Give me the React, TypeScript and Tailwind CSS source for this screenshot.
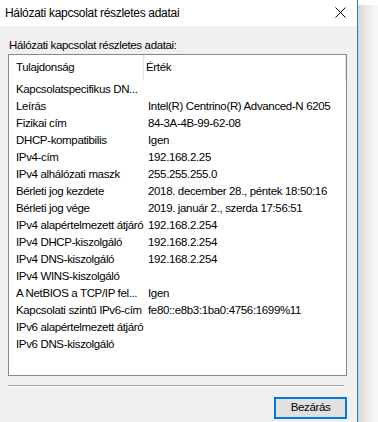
import React from "react";

const rows: [string, string][] = [
  ["Kapcsolatspecifikus DN...", ""],
  ["Leírás", "Intel(R) Centrino(R) Advanced-N 6205"],
  ["Fizikai cím", "84-3A-4B-99-62-08"],
  ["DHCP-kompatibilis", "Igen"],
  ["IPv4-cím", "192.168.2.25"],
  ["IPv4 alhálózati maszk", "255.255.255.0"],
  ["Bérleti jog kezdete", "2018. december 28., péntek 18:50:16"],
  ["Bérleti jog vége", "2019. január 2., szerda 17:56:51"],
  ["IPv4 alapértelmezett átjáró", "192.168.2.254"],
  ["IPv4 DHCP-kiszolgáló", "192.168.2.254"],
  ["IPv4 DNS-kiszolgáló", "192.168.2.254"],
  ["IPv4 WINS-kiszolgáló", ""],
  ["A NetBIOS a TCP/IP fel...", "Igen"],
  ["Kapcsolati szintű IPv6-cím", "fe80::e8b3:1ba0:4756:1699%11"],
  ["IPv6 alapértelmezett átjáró", ""],
  ["IPv6 DNS-kiszolgáló", ""],
];

export default function App() {
  return (
    <div
      className="flex w-[378px] h-[422px] overflow-hidden text-[11.5px] tracking-[-0.35px] text-black"
      style={{ fontFamily: '"Liberation Sans", Arial, sans-serif' }}
    >
      <div className="w-[357px] flex flex-col bg-[#f0f0f0]">
        <div className="h-[26px] bg-white flex items-center justify-between pl-[5px] pr-[11px]">
          <span className="text-[12px] tracking-[-0.3px] leading-none">Hálózati kapcsolat részletes adatai</span>
          <svg width="11" height="11" viewBox="0 0 11 11" className="mb-[2px]">
            <path d="M0.5 0.5 L10.5 10.5 M10.5 0.5 L0.5 10.5" stroke="#000" strokeWidth="1" />
          </svg>
        </div>
        <div className="pl-[9px] pt-[12px] h-[28px] leading-[14px]">Hálózati kapcsolat részletes adatai:</div>
        <div className="ml-[8px] w-[339px] h-[322px] border border-[#828790] bg-white flex flex-col">
          <div className="h-[26px] flex items-center">
            <div className="w-[135px] shrink-0 h-full flex items-center pl-[7px] border-r border-[#e5e5e5]">Tulajdonság</div>
            <div className="w-[202px] shrink-0 h-full flex items-center pl-[2px] border-r border-[#e5e5e5]">Érték</div>
          </div>
          {rows.map(([k, v]) => (
            <div key={k} className="h-[17px] flex items-center whitespace-nowrap">
              <div className="w-[135px] shrink-0 pl-[7px] overflow-hidden">{k}</div>
              <div className="pl-[4px]">{v}</div>
            </div>
          ))}
        </div>
        <div className="ml-[8px] w-[336px] mt-[9px] h-px bg-[#a0a0a0]" />
        <div className="ml-[8px] w-[336px] h-px bg-white" />
        <div className="flex justify-end pr-[10px] mt-[10px]">
          <button className="w-[73px] h-[22px] border-2 border-[#0078d7] bg-[#e1e1e1] flex items-center justify-center leading-none">
            Bezárás
          </button>
        </div>
      </div>
      <div className="w-px bg-[#1883d7]" />
      <div className="flex-1 flex flex-col">
        <div className="h-[5px] bg-white" />
        <div className="flex-1 bg-gradient-to-r from-[#d6d6d6] via-[#ececec] to-[#f8f8f8]" />
      </div>
    </div>
  );
}
